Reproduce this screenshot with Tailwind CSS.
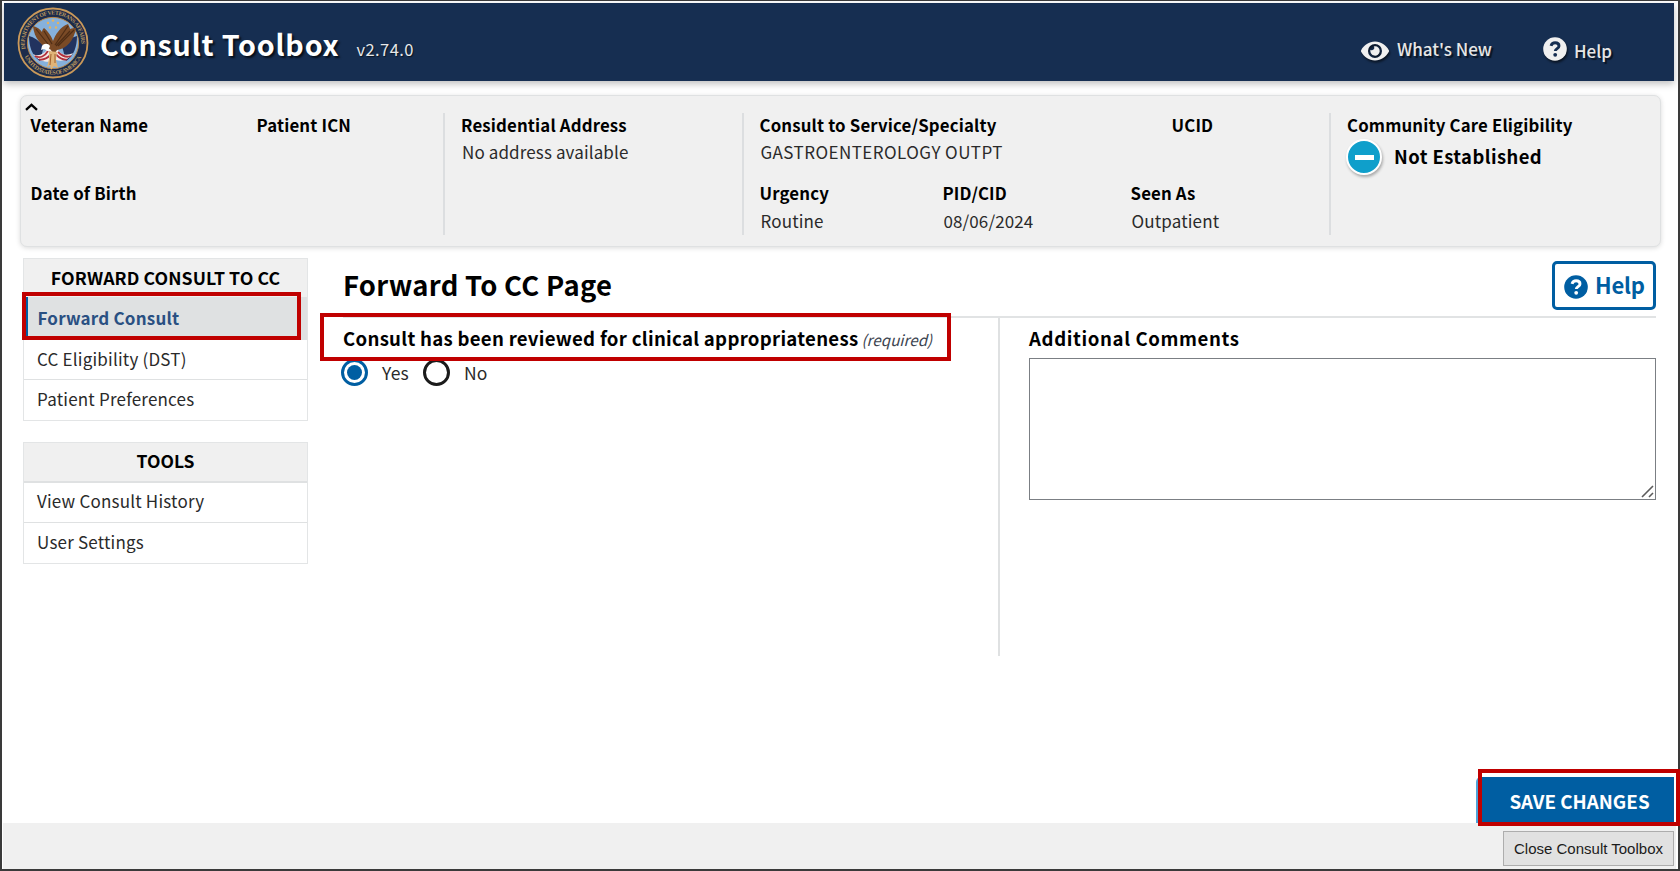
<!DOCTYPE html>
<html lang="en">
<head>
<meta charset="utf-8">
<title>Consult Toolbox</title>
<script src="https://cdn.jsdelivr.net/npm/@tailwindcss/browser@4"></script>
</head>
<body class="bg-white">
<div class="relative flex h-[871px] w-[1680px] flex-col overflow-hidden bg-white pl-1 pr-1.5 pt-[3px] font-['Noto_Sans_CJK_SC','Noto_Sans',sans-serif] text-[#2a2a2a]">

  <header class="flex h-[78px] w-[1670px] shrink-0 items-start bg-[#162e51] shadow-[0_3px_7px_rgba(0,0,0,0.25)]">
    <svg class="ml-[13px] mt-[4px] h-[72px] w-[72px] shrink-0" viewBox="0 0 72 72">
      <circle cx="36" cy="36" r="34.500" fill="#1c2b4b" stroke="#c9995a" stroke-width="1.800"/>
      <circle cx="36" cy="36" r="25.600" fill="#86b1dc" stroke="#b98a4d" stroke-width="1"/>
      <path id="sealTop" d="M8.500 42A28.200 28.200 0 1 1 63.500 42" fill="none"/>
      <path id="sealBot" d="M5 42A31.600 31.600 0 0 0 67 42" fill="none"/>
      <g fill="#b9965f" font-size="5.800" font-weight="700" font-family="Liberation Serif, serif">
        <text><textPath href="#sealTop" textLength="96">DEPARTMENT OF VETERANS AFFAIRS</textPath></text>
        <text><textPath href="#sealBot" startOffset="8" textLength="70">UNITED STATES OF AMERICA</textPath></text>
      </g>
      <g fill="#e8b35c"><circle cx="36" cy="13.500" r="1.300"/><circle cx="31" cy="16" r="1.200"/><circle cx="41" cy="16" r="1.200"/><circle cx="33" cy="20.500" r="1.200"/><circle cx="39" cy="20.500" r="1.200"/></g>
      <path d="M12 29c5 1 10 5 15 10l-4 15c-8-5-11-15-11-25zM60 29c-5 1-10 5-15 10l4 15c8-5 11-15 11-25z" fill="#22335f"/>
      <path d="M16 47c5 3 12 0 15-6l10 2c3 5 9 6 15 3-4 7-11 9-17 7-8 4-18 1-23-6z" fill="#f3e9e6"/>
      <path d="M18 49c5 3 10 0 13-5M22 52.500c5 1 9-2 12-5M54 49c-5 2-9 0-13-4M50 52.500c-4 1-8-2-11-5" stroke="#b2303c" stroke-width="1.800" fill="none"/>
      <path d="M33 42c-8-2-16-11-17-23 4 1 7 3 9 6 0-2 1-3 2-4 4 3 8 9 9 13 2-6 7-14 15-17 1 2 2 4 2 5 2-1 4-1 6-1-2 13-10 21-19 22l-3 4z" fill="#7a4a26"/>
      <path d="M19 22l12 15M27 24l8 13M51 19L38 38M57 23L41 39M53 24L39 39" stroke="#4f2d15" stroke-width="1.200"/>
      <path d="M25 39c2-3 6-3 8 0l-2 5-4-2-3 1z" fill="#fff"/>
      <path d="M32 44l8 1-1 8 2 8-4-2-3 4-1-5-3 2 2-8z" fill="#e0b478"/>
      <path d="M34 47l-1 11M38 47v9" stroke="#a0622f" stroke-width="1"/>
    </svg>
    <div class="ml-[11px] mt-[24.500px] text-[28.700px] font-bold leading-8 tracking-[0.800px] text-white [text-shadow:2px_2px_2px_rgba(0,0,0,0.7)]">Consult Toolbox</div>
    <div class="ml-[17px] mt-[34px] text-[16.500px] leading-6 tracking-[0.400px] text-[#e6e8ea] [text-shadow:1px_1px_1px_rgba(0,0,0,0.6)]">v2.74.0</div>
    <div class="ml-auto flex items-start pr-[62px] text-[17px] font-medium leading-6 text-[#e6e6e6] [text-shadow:2px_2px_1px_rgba(0,0,0,0.6)]">
      <svg class="mt-[37px] mr-2 h-[22px] w-[28px] drop-shadow-[1px_2px_1px_rgba(0,0,0,0.6)]" viewBox="0 0 576 448" fill="#f0f0f0"><path fill-rule="evenodd" d="M573 209C518 102 410 30 288 30S58 102 3 209a32 32 0 0 0 0 30c55 107 163 179 285 179s230-72 285-179a32 32 0 0 0 0-30zM288 368a144 144 0 1 1 0-288 144 144 0 0 1 0 288zm0-240a95 95 0 0 0-25 4 48 48 0 0 1-67 67 96 96 0 1 0 92-71z"/></svg>
      <span class="mt-[34px] w-[146px] whitespace-nowrap">What's New</span>
      <svg class="mt-[34px] mr-[7px] h-6 w-6 drop-shadow-[1px_2px_1px_rgba(0,0,0,0.6)]" viewBox="0 0 24 24"><circle cx="12" cy="12" r="11.800" fill="#f0f0f0"/><path d="M8 8.900C8.700 6.700 10.100 5.700 12.100 5.700c2.200 0 3.900 1.200 3.900 3.200 0 2.600-3.700 2.700-3.700 5.200" fill="none" stroke="#162e51" stroke-width="2.900"/><circle cx="12.200" cy="17.800" r="1.900" fill="#162e51"/></svg>
      <span class="mt-[35.500px]">Help</span>
    </div>
  </header>

  <section class="ml-4 mt-[14px] flex h-[152px] w-[1641px] shrink-0 rounded-[7px] border border-[#dfe1e2] bg-[#f0f0f0] pb-[11px] pt-[17px] text-[16.800px] leading-5 tracking-[0.160px] shadow-[0_1px_5px_rgba(0,0,0,0.15)]">
    <div class="relative grid w-[424px] grid-cols-[226px_1fr] grid-rows-[68px_1fr] border-r-2 border-[#dcdee0] pl-[9.500px] pt-[2px] font-bold text-black">
      <svg class="absolute left-[4px] -top-[10px] h-[8px] w-[13px]" viewBox="0 0 13 8"><path d="M1 6.800L6.500 1.800L12 6.800" fill="none" stroke="#000" stroke-width="2.300"/></svg>
      <div>Veteran Name</div>
      <div>Patient ICN</div>
      <div>Date of Birth</div>
    </div>
    <div class="w-[299px] border-r-2 border-[#dcdee0] pl-[16px] pt-[2px]">
      <div class="font-bold text-black">Residential Address</div>
      <div class="mt-[7px] pl-[1px] text-[17px] tracking-[0.120px]">No address available</div>
    </div>
    <div class="flex w-[587px] flex-col border-r-2 border-[#dcdee0] pl-[15.500px] pt-[2px]">
      <div class="flex h-[68px] shrink-0">
        <div class="w-[412px]">
          <div class="font-bold text-black">Consult to Service/Specialty</div>
          <div class="mt-[7px] pl-[1px] text-[17px] tracking-[0.440px]">GASTROENTEROLOGY OUTPT</div>
        </div>
        <div class="font-bold text-black">UCID</div>
      </div>
      <div class="grid grid-cols-[183px_188px_1fr]">
        <div>
          <div class="font-bold text-black">Urgency</div>
          <div class="mt-[8px] pl-[1px] text-[17px] tracking-[0.150px]">Routine</div>
        </div>
        <div>
          <div class="font-bold text-black">PID/CID</div>
          <div class="mt-[8px] pl-[1px] text-[17px] tracking-[0.100px]">08/06/2024</div>
        </div>
        <div>
          <div class="font-bold text-black">Seen As</div>
          <div class="mt-[8px] pl-[1px] text-[17px] tracking-[0.150px]">Outpatient</div>
        </div>
      </div>
    </div>
    <div class="pl-[16px] pt-[2px] font-bold text-black">
      <div>Community Care Eligibility</div>
      <div class="mt-[4px] flex items-start">
        <span class="-ml-px flex h-9 w-9 items-center justify-center rounded-full border-2 border-white bg-[#0f9fcb] shadow-[1px_2px_3px_rgba(0,0,0,0.3)]"><span class="h-[5px] w-[19px] bg-white"></span></span>
        <span class="ml-[12px] mt-[6.500px] text-[18.400px] tracking-[0.440px]">Not Established</span>
      </div>
    </div>
  </section>

  <main class="mt-[11px] flex min-h-0 flex-1">
    <nav class="ml-[19px] w-[285px] shrink-0 text-[17px] leading-6 tracking-[0.200px]">
      <div class="h-[163px] border border-[#e3e5e6]">
        <h2 class="h-[38px] bg-[#f0f0f0] pt-[6px] text-center text-[17.700px] font-bold tracking-[0.080px] text-black">FORWARD CONSULT TO CC</h2>
        <div class="h-[43px] border-l-4 border-[#005ea2] bg-[#dfe1e2] pl-[9.500px] pt-[9px] font-bold text-[#2a5082]">Forward Consult</div>
        <div class="h-[40px] border-b border-[#dfe1e2] pl-[13px] pt-[7px]">CC Eligibility (DST)</div>
        <div class="pl-[13px] pt-[6.500px]">Patient Preferences</div>
      </div>
      <div class="mt-[21px] h-[122px] border border-[#e3e5e6]">
        <h2 class="h-[40px] border-b-2 border-[#dfe1e2] bg-[#f0f0f0] pt-[5.500px] text-center text-[17.500px] font-bold tracking-normal text-black">TOOLS</h2>
        <div class="h-[40px] border-b border-[#dfe1e2] pl-[13px] pt-[6px]">View Consult History</div>
        <div class="pl-[13px] pt-[7px]">User Settings</div>
      </div>
    </nav>
    <div class="ml-[35px] w-[1313px]">
      <div class="flex h-[60px] items-start justify-between border-b-2 border-[#e1e3e4]">
        <h1 class="mt-[10px] text-[27.400px] font-bold leading-8 tracking-[0.280px] text-black">Forward To CC Page</h1>
        <div class="mt-[3px] flex h-[49px] w-[104px] items-center rounded-[5px] border-[3px] border-[#005ea2] pl-[9px] text-[22px] font-bold leading-8 text-[#005ea2]">
          <svg class="mr-[7px] mt-[2px] h-6 w-6 shrink-0" viewBox="0 0 24 24"><circle cx="12" cy="12" r="11.800" fill="#005ea2"/><path d="M8 8.900C8.700 6.700 10.100 5.700 12.100 5.700c2.200 0 3.900 1.200 3.900 3.200 0 2.600-3.700 2.700-3.700 5.200" fill="none" stroke="#fff" stroke-width="2.900"/><circle cx="12.200" cy="17.800" r="1.900" fill="#fff"/></svg>
          <span class="-mt-[3px] tracking-[-0.200px]">Help</span>
        </div>
      </div>
      <div class="flex h-[338px]">
        <div class="w-[657px] border-r-2 border-[#dfe1e2] pt-[8px]">
          <div class="h-6 whitespace-nowrap text-[18.600px] font-bold leading-6 tracking-[0.290px] text-black">Consult has been reviewed for clinical appropriateness<span class="ml-[3px] text-[15.200px] font-normal italic tracking-normal text-[#3d4551]">(required)</span></div>
          <div class="-ml-[2px] mt-[9px] flex items-center text-[17.500px] leading-7 tracking-[0.200px]">
            <span class="-mt-px flex h-[27px] w-[27px] items-center justify-center rounded-full border-[3px] border-[#005ea2]"><span class="h-[15px] w-[15px] rounded-full bg-[#005ea2]"></span></span>
            <span class="ml-[14px] w-[41px]">Yes</span>
            <span class="-mt-px h-[27px] w-[27px] rounded-full border-[3px] border-[#1b1b1b]"></span>
            <span class="ml-[14px]">No</span>
          </div>
        </div>
        <div class="ml-[29px] flex-1 pt-[8px]">
          <div class="text-[18.600px] font-bold leading-6 tracking-[0.620px] text-black">Additional Comments</div>
          <div class="mt-[8px] flex h-[142px] w-[627px] items-end justify-end border-[1.500px] border-[#7b7f84] p-px">
            <svg class="h-[13px] w-[13px]" viewBox="0 0 13 13"><path d="M1 12L12 1M8 12L12 8" stroke="#5c5c5c" stroke-width="1.600"/></svg>
          </div>
        </div>
      </div>
    </div>
  </main>

  <div class="flex h-[46px] shrink-0 justify-end">
    <button class="h-[46px] w-[198px] rounded-tl-[5px] border-l-2 border-[#4fa3d9] bg-[#005ea2] pl-[7px] pt-[2px] text-[18.800px] font-bold leading-[44px] text-white">SAVE CHANGES</button>
  </div>
  <footer class="-ml-px flex h-[48px] w-[1673px] shrink-0 items-start justify-end bg-[#f0f0f0] pr-[2px] pt-2">
    <button class="h-[35px] w-[171px] border border-[#adadad] bg-[#e1e1e1] pt-px font-['Liberation_Sans',Arial,sans-serif] text-[15px] text-[#1b1b1b]">Close Consult Toolbox</button>
  </footer>

  <!-- window frame and callout boxes -->
  <div class="pointer-events-none absolute inset-0 border-x-2 border-b-2 border-t border-[#3a3a3a]"></div>
  <div class="pointer-events-none absolute left-[22px] top-[292px] h-[48px] w-[279px] border-4 border-[#c00000]"></div>
  <div class="pointer-events-none absolute left-[320px] top-[313px] h-[48px] w-[631px] border-4 border-[#c00000]"></div>
  <div class="pointer-events-none absolute left-[1478px] top-[769px] h-[57px] w-[202px] border-4 border-[#c00000]"></div>
</div>
</body>
</html>
